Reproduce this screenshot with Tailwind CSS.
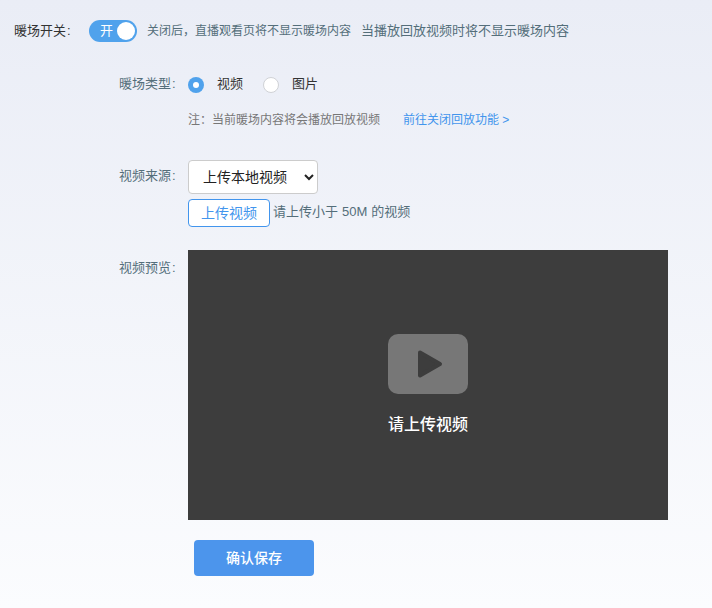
<!DOCTYPE html>
<html lang="zh-CN">
<head>
<meta charset="utf-8">
<title>暖场设置</title>
<script src="https://cdn.jsdelivr.net/npm/@tailwindcss/browser@4"></script>
</head>
<body class="h-[608px] w-[712px] overflow-hidden bg-linear-to-b from-[#eaedf6] to-[#fbfcfe] font-['Liberation_Sans','Noto_Sans_CJK_SC',sans-serif] text-[13px] leading-5 text-[#546e7a]">
<header class="flex h-[62px] items-start pl-[14px] pt-5">
  <span class="w-[75px] shrink-0 pt-px text-[#333]">暖场开关<span class="ml-px">:</span></span>
  <button class="flex h-[22px] w-12 shrink-0 items-center justify-between rounded-full bg-[#50a2ec] pl-[11px] pr-[2px] text-white" role="switch" aria-checked="true"><span>开</span><span class="size-[18px] rounded-full bg-white"></span></button>
  <span class="ml-[10px] w-[214px] shrink-0 whitespace-nowrap pt-px text-xs leading-5">关闭后，直播观看页将不显示暖场内容</span>
  <span class="whitespace-nowrap pt-px">当播放回放视频时将不显示暖场内容</span>
</header>
<main class="grid grid-cols-[69px_480px] pl-[119px]">
  <div class="h-[98px] pt-3">暖场类型<span class="ml-px">:</span></div>
  <div>
    <div class="flex pt-3 text-[#333]">
      <label class="flex items-start"><span class="mt-[3px] flex size-4 items-center justify-center rounded-full bg-[#50a2ec]"><i class="size-[6px] rounded-full bg-white"></i></span><span class="ml-[13px]">视频</span></label>
      <label class="ml-5 flex items-start"><span class="mt-[3px] size-4 rounded-full border border-[#d0d2d6] bg-white"></span><span class="ml-[13px]">图片</span></label>
    </div>
    <p class="pt-4 text-xs leading-5 text-[#777]">注：当前暖场内容将会播放回放视频<a class="ml-[23px] text-[#4295ed]">前往关闭回放功能 &gt;</a></p>
  </div>
  <div class="h-[90px] pt-[6px]">视频来源<span class="ml-px">:</span></div>
  <div>
    <div class="flex h-[34px] w-[130px] items-center justify-between rounded border border-[#ccc] bg-white pl-[14px] pr-[3px] text-sm text-[#222]">
      <span>上传本地视频</span>
      <svg class="size-[10px]" viewBox="0 0 10 10" fill="none" stroke="#222" stroke-width="2"><path d="M1 3l4 4 4-4"/></svg>
    </div>
    <div class="mt-[5px] flex">
      <button class="h-7 w-[82px] rounded border border-[#4295ed] bg-white text-sm text-[#4295ed]">上传视频</button>
      <span class="ml-[3px] pt-[3px] [word-spacing:0.4px]">请上传小于 50M 的视频</span>
    </div>
  </div>
  <div class="pt-2">视频预览<span class="ml-px">:</span></div>
  <div class="flex h-[270px] flex-col items-center bg-[#3d3d3d] pt-[84px] text-white">
    <svg class="h-[60px] w-20" viewBox="0 0 80 60"><rect width="80" height="60" rx="10" fill="#777"/><path d="M32 18.5L52 30 32 41.5Z" fill="#3d3d3d" stroke="#3d3d3d" stroke-width="4" stroke-linejoin="round"/></svg>
    <p class="mt-[19px] text-base font-medium leading-6">请上传视频</p>
  </div>
  <button class="col-start-2 ml-[6px] mt-5 h-9 w-[120px] rounded bg-[#4c95ec] text-sm font-medium text-white">确认保存</button>
</main>
</body>
</html>
